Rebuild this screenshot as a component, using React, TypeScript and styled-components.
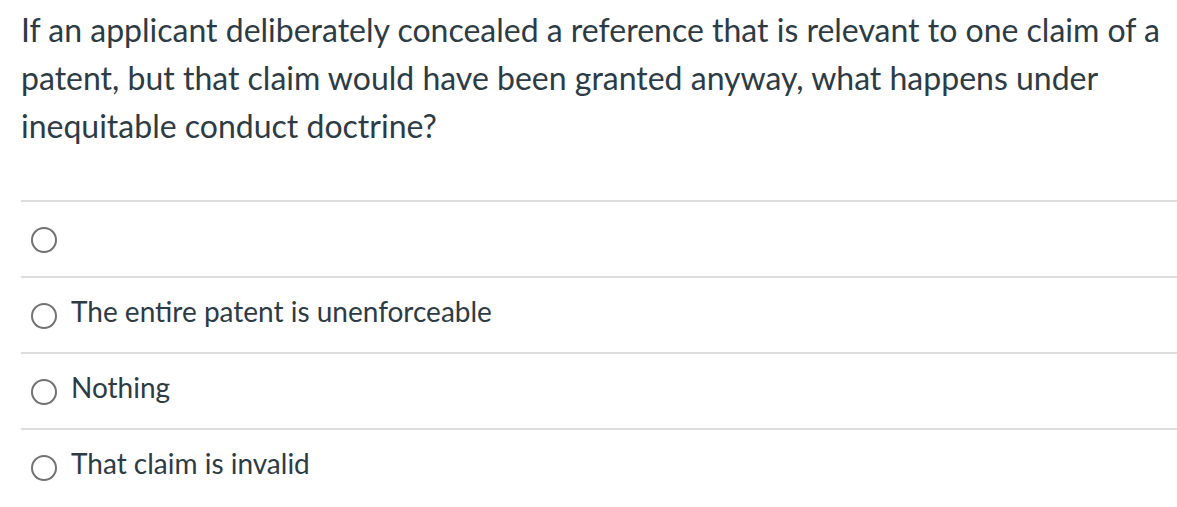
import React from "react";
import styled, { createGlobalStyle } from "styled-components";

const Global = createGlobalStyle`
  html, body { margin: 0; padding: 0; background: #fff; }
  body { font-family: Lato, "Open Sans", sans-serif; color: #2d3b45; }
`;

const Page = styled.div`
  padding: 6px 0 0 21px;
  width: 1156px;
`;

const Question = styled.div`
  font-size: 32px;
  line-height: 48px;
  margin: 0 0 50px;
`;

const Options = styled.div`
  display: flex;
  flex-direction: column;
`;

const Option = styled.label`
  display: flex;
  align-items: center;
  gap: 14px;
  height: 74px;
  border-top: 2px solid #dddddd;
  padding-left: 10px;
  font-size: 28px;
  cursor: pointer;
`;

const Radio = styled.span`
  box-sizing: border-box;
  width: 26px;
  height: 26px;
  border-radius: 50%;
  border: 2px solid #727272;
  flex: none;
  margin-top: 2px;
`;

const Text = styled.span`
  line-height: 1;
  padding-bottom: 8px;
`;

const answers = [
  "",
  "The entire patent is unenforceable",
  "Nothing",
  "That claim is invalid",
];

export default function App() {
  return (
    <>
      <Global />
      <Page>
        <Question>
          If an applicant deliberately concealed a reference that is relevant to one claim of a
          patent, but that claim would have been granted anyway, what happens under
          inequitable conduct doctrine?
        </Question>
        <Options>
          {answers.map((a, i) => (
            <Option key={i}>
              <Radio />
              <Text>{a}</Text>
            </Option>
          ))}
        </Options>
      </Page>
    </>
  );
}
